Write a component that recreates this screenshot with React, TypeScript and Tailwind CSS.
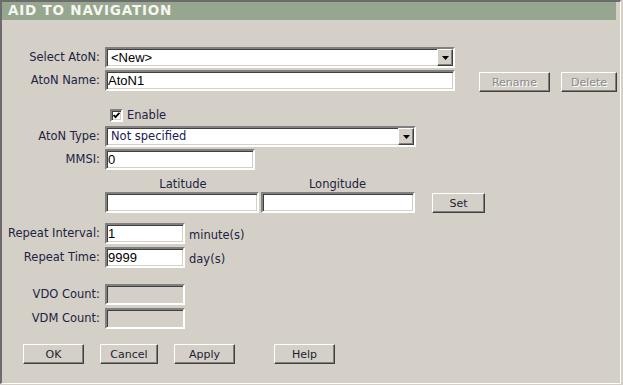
import { ReactNode } from "react"

const sunken =
  "border-2 border-t-[#808080] border-l-[#808080] border-r-white border-b-white shadow-[inset_1px_1px_0_#404040,inset_-1px_-1px_0_#d4d0c8]"
const raised =
  "border border-t-white border-l-white border-r-[#404040] border-b-[#404040] shadow-[inset_-1px_-1px_0_#808080] bg-[#d4d0c8]"
const labelFont = "font-['DejaVu_Sans',sans-serif] text-[11.5px] text-[#23233f]"
const inputFont = "font-['Liberation_Sans',Arial,sans-serif] text-[13px] text-black"

function Label({ children }: { children: ReactNode }) {
  return (
    <div className={`w-[98px] shrink-0 text-right leading-none ${labelFont}`}>
      {children}
    </div>
  )
}

function TextBox({
  value,
  width,
  disabled,
}: {
  value?: string
  width: string
  disabled?: boolean
}) {
  return (
    <div
      className={`ml-[5px] flex h-[21px] shrink-0 items-center pl-[1px] leading-none ${width} ${sunken} ${inputFont} ${
        disabled ? "bg-[#d4d0c8]" : "bg-white"
      }`}
    >
      {value}
    </div>
  )
}

function Select({
  value,
  width,
  font,
}: {
  value: string
  width: string
  font: string
}) {
  return (
    <div
      className={`ml-[5px] flex h-[21px] items-center bg-white ${width} ${sunken}`}
    >
      <span className={`flex-1 pl-[4px] leading-none ${font}`}>{value}</span>
      <div
        className={`flex h-[17px] w-[16px] items-center justify-center ${raised}`}
      >
        <svg width="7" height="4" viewBox="0 0 7 4">
          <path d="M0 0h7L3.5 4z" fill="#000" />
        </svg>
      </div>
    </div>
  )
}

function Button({
  children,
  width,
  disabled,
}: {
  children: ReactNode
  width: string
  disabled?: boolean
}) {
  return (
    <div
      className={`flex h-[20px] shrink-0 items-center justify-center font-['DejaVu_Sans',sans-serif] text-[11px] leading-none ${width} ${raised} ${
        disabled
          ? "text-[#8a8a8a] [text-shadow:1px_1px_0_#fff]"
          : "text-[#1e1e30]"
      }`}
    >
      {children}
    </div>
  )
}

export default function App() {
  return (
    <div className="h-[385px] w-[623px] bg-[#d4d0c8]">
      <div className="flex h-[384px] w-[621px] flex-col border-t-2 border-r border-b border-l-2 border-t-[#6c6c6c] border-r-white border-b-white border-l-[#6c6c6c]">
        <div className="mr-[4px] flex h-[18px] shrink-0 items-center bg-[#97a78f] pl-[6px] font-['DejaVu_Sans',sans-serif] text-[13.5px] leading-none font-bold tracking-[0.8px] text-[#f6f6f0]">
          AID TO NAVIGATION
        </div>

        <div className="flex flex-col pt-[27px]">
          <div className="flex h-[21px] items-center">
            <Label>Select AtoN:</Label>
            <Select value="<New>" width="w-[350px]" font={inputFont} />
          </div>

          <div className="mt-[2px] flex h-[21px] items-start">
            <div className="flex h-[21px] items-center">
              <Label>AtoN Name:</Label>
            </div>
            <TextBox value="AtoN1" width="w-[350px]" />
            <div className="mt-[2px] ml-[24px] flex gap-[11px]">
              <Button width="w-[71px]" disabled>
                Rename
              </Button>
              <Button width="w-[56px]" disabled>
                Delete
              </Button>
            </div>
          </div>

          <div className="mt-[18px] flex h-[13px] items-center pl-[108px]">
            <div
              className={`flex h-[13px] w-[13px] items-center justify-center bg-white ${sunken}`}
            >
              <svg width="7" height="7" viewBox="0 0 7 7">
                <path
                  d="M0.5 3l2 2.2L6.5 0.8"
                  fill="none"
                  stroke="#000"
                  strokeWidth="1.8"
                />
              </svg>
            </div>
            <span className={`ml-[4px] leading-none ${labelFont} text-[#1e1e30]`}>
              Enable
            </span>
          </div>

          <div className="mt-[4px] flex h-[21px] items-center">
            <Label>AtoN Type:</Label>
            <Select
              value="Not specified"
              width="w-[311px]"
              font={`font-['DejaVu_Sans',sans-serif] text-[11.5px] text-[#1a1a50]`}
            />
          </div>

          <div className="mt-[2px] flex h-[21px] items-center">
            <Label>MMSI:</Label>
            <TextBox value="0" width="w-[150px]" />
          </div>

          <div
            className={`mt-[8px] flex h-[14px] items-center pl-[103px] leading-none ${labelFont}`}
          >
            <div className="w-[156px] text-center">Latitude</div>
            <div className="w-[153px] text-center">Longitude</div>
          </div>

          <div className="flex h-[21px] items-start">
            <div className="w-[98px]" />
            <TextBox width="w-[154px]" />
            <div className="-ml-[3px]">
              <TextBox width="w-[154px]" />
            </div>
            <div className="mt-[1px] ml-[17px]">
              <Button width="w-[53px]">Set</Button>
            </div>
          </div>

          <div className="mt-[10px] flex h-[21px] items-center">
            <Label>Repeat Interval:</Label>
            <TextBox value="1" width="w-[80px]" />
            <span className={`mt-[5px] ml-[4px] leading-none ${labelFont}`}>
              minute(s)
            </span>
          </div>

          <div className="mt-[3px] flex h-[21px] items-center">
            <Label>Repeat Time:</Label>
            <TextBox value="9999" width="w-[80px]" />
            <span className={`mt-[5px] ml-[4px] leading-none ${labelFont}`}>
              day(s)
            </span>
          </div>

          <div className="mt-[16px] flex h-[21px] items-center">
            <Label>VDO Count:</Label>
            <TextBox width="w-[80px]" disabled />
          </div>

          <div className="mt-[3px] flex h-[21px] items-center">
            <Label>VDM Count:</Label>
            <TextBox width="w-[80px]" disabled />
          </div>

          <div className="mt-[15px] flex h-[20px] pl-[21px]">
            <Button width="w-[61px]">OK</Button>
            <div className="ml-[16px]">
              <Button width="w-[58px]">Cancel</Button>
            </div>
            <div className="ml-[16px]">
              <Button width="w-[61px]">Apply</Button>
            </div>
            <div className="ml-[39px]">
              <Button width="w-[61px]">Help</Button>
            </div>
          </div>
        </div>
      </div>
    </div>
  )
}
